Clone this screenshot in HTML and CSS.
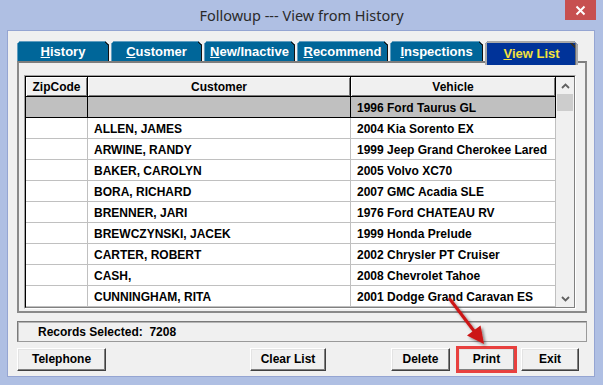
FILE: index.html
```html
<!DOCTYPE html>
<html>
<head>
<meta charset="utf-8">
<link rel="stylesheet" href="styles.css">
</head>
<body>
<div class="window">
  <div class="titlebar">
    <span class="title">Followup --- View from History</span>
    <div class="close">
      <svg width="11" height="11" viewBox="0 0 11 11"><path d="M1.5 1.5 L9.5 9.5 M9.5 1.5 L1.5 9.5" stroke="#fff" stroke-width="2" fill="none"/></svg>
    </div>
  </div>
  <div class="client">
    <div class="tabs">
      <div class="tab t1"><u>H</u>istory</div>
      <div class="tab t2"><u>C</u>ustomer</div>
      <div class="tab t3"><u>N</u>ew/Inactive</div>
      <div class="tab t4"><u>R</u>ecommend</div>
      <div class="tab t5"><u>I</u>nspections</div>
      <div class="tab t6 active"><u>V</u>iew List</div>
    </div>
    <div class="panel">
      <div class="gridframe">
        <div class="grid">
          <div class="table">
            <div class="row head">
              <div class="cell zip">ZipCode</div>
              <div class="cell cust">Customer</div>
              <div class="cell veh">Vehicle</div>
            </div>
            <div class="body">
              <div class="row sel"><div class="cell zip"></div><div class="cell cust"></div><div class="cell veh">1996 Ford Taurus GL</div></div>
              <div class="row"><div class="cell zip"></div><div class="cell cust">ALLEN, JAMES</div><div class="cell veh">2004 Kia Sorento EX</div></div>
              <div class="row"><div class="cell zip"></div><div class="cell cust">ARWINE, RANDY</div><div class="cell veh">1999 Jeep Grand Cherokee Lared</div></div>
              <div class="row"><div class="cell zip"></div><div class="cell cust">BAKER, CAROLYN</div><div class="cell veh">2005 Volvo XC70</div></div>
              <div class="row"><div class="cell zip"></div><div class="cell cust">BORA, RICHARD</div><div class="cell veh">2007 GMC Acadia SLE</div></div>
              <div class="row"><div class="cell zip"></div><div class="cell cust">BRENNER, JARI</div><div class="cell veh">1976 Ford CHATEAU RV</div></div>
              <div class="row"><div class="cell zip"></div><div class="cell cust">BREWCZYNSKI, JACEK</div><div class="cell veh">1999 Honda Prelude</div></div>
              <div class="row"><div class="cell zip"></div><div class="cell cust">CARTER, ROBERT</div><div class="cell veh">2002 Chrysler PT Cruiser</div></div>
              <div class="row"><div class="cell zip"></div><div class="cell cust">CASH,</div><div class="cell veh">2008 Chevrolet Tahoe</div></div>
              <div class="row"><div class="cell zip"></div><div class="cell cust">CUNNINGHAM, RITA</div><div class="cell veh">2001 Dodge Grand Caravan ES</div></div>
              <div class="row"><div class="cell zip"></div><div class="cell cust"></div><div class="cell veh"></div></div>
            </div>
          </div>
          <div class="scrollbar">
            <div class="sbtn"><svg width="9" height="6" viewBox="0 0 9 6"><path d="M1 5 L4.5 1.5 L8 5" stroke="#606060" stroke-width="1.8" fill="none"/></svg></div>
            <div class="thumb"></div>
            <div class="track"></div>
            <div class="sbtn"><svg width="9" height="6" viewBox="0 0 9 6"><path d="M1 1 L4.5 4.5 L8 1" stroke="#606060" stroke-width="1.8" fill="none"/></svg></div>
          </div>
        </div>
      </div>
    </div>
    <div class="records">Records Selected:&nbsp; 7208</div>
    <div class="buttons">
      <div class="btn b-tel">Telephone</div>
      <div class="btn b-clear">Clear List</div>
      <div class="btn b-del">Delete</div>
      <div class="btn b-print">Print</div>
      <div class="btn b-exit">Exit</div>
    </div>
  </div>
  <div class="highlight"></div>
  <svg class="arrow" width="603" height="385" viewBox="0 0 603 385">
    <defs>
      <filter id="sh" x="-50%" y="-50%" width="200%" height="200%">
        <feDropShadow dx="2" dy="2" stdDeviation="1.5" flood-color="#000" flood-opacity="0.45"/>
      </filter>
    </defs>
    <g filter="url(#sh)">
      <line x1="449" y1="298" x2="474" y2="331" stroke="#cc1414" stroke-width="3"/>
      <polygon points="484,344 480.5,325.5 467,335.5" fill="#cc1414"/>
    </g>
  </svg>
</div>
</body>
</html>
```
FILE: styles.css
```css
* { box-sizing: border-box; }
body { margin: 0; }

.window {
  width: 603px;
  height: 385px;
  background: #afbfe3;
  position: relative;
  overflow: hidden;
  display: flex;
  flex-direction: column;
  font-family: "Liberation Sans", Arial, sans-serif;
  color: #000;
}

.titlebar {
  height: 30px;
  flex: none;
  display: flex;
  justify-content: center;
  position: relative;
}
.title {
  font-family: "Noto Sans", "Open Sans", sans-serif;
  font-size: 14.5px;
  line-height: 30px;
  color: #2a2a2a;
}
.close {
  position: absolute;
  top: 0;
  right: 7px;
  width: 31px;
  height: 20px;
  background: #c75050;
  display: flex;
  align-items: center;
  justify-content: center;
}
.close svg { display: block; }

.client {
  flex: 1;
  margin: 0 8px 8px 7px;
  background: #f0f0f0;
  border: 1px solid #95a5d2;
  padding: 10px 0 0 9px;
  display: flex;
  flex-direction: column;
}

/* tabs */
.tabs {
  display: flex;
  gap: 2px;
  height: 20px;
  flex: none;
  align-items: flex-start;
  position: relative;
  z-index: 2;
}
.tab {
  width: 91px;
  height: 20px;
  flex: none;
  background:
    linear-gradient(225deg, transparent 2.6px, #101010 2.6px, #101010 4px, transparent 4px),
    #006699;
  color: #fff;
  font-weight: bold;
  font-size: 13px;
  line-height: 21px;
  text-align: center;
  clip-path: polygon(3px 0, calc(100% - 4px) 0, 100% 4px, 100% 100%, 0 100%, 0 3px);
  box-shadow: inset -1px 0 #101010, inset 1px 1px #5f9dc0;
}
.tab u { text-decoration-thickness: 1px; text-underline-offset: 1px; }
.t1 { width: 92px; }
.t5 { width: 93px; }
.t6 { width: 93px; }
.tab.active {
  height: 24px;
  background:
    linear-gradient(225deg, transparent 2.6px, #303030 2.6px, #303030 4.5px, transparent 4.5px),
    #003399;
  color: #f4e23c;
  border: 2px solid #a9a9a9;
  border-bottom: none;
  line-height: 21px;
  box-shadow: inset -1px 0 #6d6d6d;
}

/* panel */
.panel {
  width: 570px;
  height: 252px;
  flex: none;
  border: 2px solid #8a8a8a;
  border-top-color: #7d7d7d;
  padding: 12px 9px 2px 5px;
  background: #f0f0f0;
}
.gridframe {
  width: 552px;
  height: 234px;
  border: 1px solid;
  border-color: #a0a0a0 #ffffff #ffffff #a0a0a0;
}
.grid {
  height: 100%;
  display: flex;
  border: 1px solid;
  border-color: #000 #808080 #808080 #000;
}
.table {
  width: 530px;
  flex: none;
  display: flex;
  flex-direction: column;
}
.row {
  display: flex;
  height: 21px;
  flex: none;
}
.cell {
  height: 100%;
  flex: none;
  font-size: 12px;
  font-weight: bold;
  line-height: 22px;
  white-space: nowrap;
  overflow: hidden;
  background: #fff;
  border-right: 1px solid #c0c0c0;
  border-bottom: 1px solid #c0c0c0;
  padding-left: 6px;
}
.zip { width: 62px; }
.cust { width: 263px; }
.veh { width: 205px; }

.row.head { height: 20px; }
.head .cell {
  background: #f0f0f0;
  text-align: center;
  padding-left: 0;
  line-height: 21px;
  border-right: 1px solid #000;
  border-bottom: 1px solid #000;
  box-shadow: inset 1px 1px #ffffff, inset -1px -1px #7a7a7a;
}
.body {
  height: 210px;
  overflow: hidden;
}
.row.sel .cell {
  background: #c0c0c0;
  border-right-color: #000;
  border-bottom-color: #000;
}

.scrollbar {
  flex: 1;
  display: flex;
  flex-direction: column;
  background: #f0f0f0;
}
.sbtn {
  height: 17px;
  flex: none;
  display: flex;
  align-items: center;
  justify-content: center;
}
.sbtn svg { display: block; }
.thumb {
  height: 17px;
  flex: none;
  margin: 0 1px;
  background: #cdcdcd;
}
.track { flex: 1; }

/* records */
.records {
  width: 570px;
  height: 21px;
  flex: none;
  margin-top: 8px;
  border: 1px solid;
  border-color: #7a7a7a #9a9a9a #9a9a9a #7a7a7a;
  box-shadow: inset 1px 1px #b5b5b5;
  padding-left: 20px;
  font-size: 12px;
  font-weight: bold;
  line-height: 21px;
  white-space: pre;
}

/* buttons */
.buttons {
  display: flex;
  margin-top: 6px;
  height: 23px;
  flex: none;
}
.btn {
  height: 23px;
  flex: none;
  background: #f0f0f0;
  border: 1px solid;
  border-color: #ffffff #404040 #404040 #ffffff;
  box-shadow: inset -1px -1px #808080, inset 1px 1px #e3e3e3;
  font-size: 12px;
  font-weight: bold;
  line-height: 21px;
  text-align: center;
}
.b-tel { width: 89px; }
.b-clear { width: 76px; margin-left: 144px; }
.b-del { width: 59px; margin-left: 65px; }
.b-print { width: 57px; margin-left: 8px; }
.b-exit { width: 58px; margin-left: 6px; }

/* annotations */
.highlight {
  position: absolute;
  left: 456px;
  top: 346px;
  width: 61px;
  height: 27px;
  border: 3px solid #e8403e;
}
.arrow {
  position: absolute;
  left: 0;
  top: 0;
  pointer-events: none;
}
```
